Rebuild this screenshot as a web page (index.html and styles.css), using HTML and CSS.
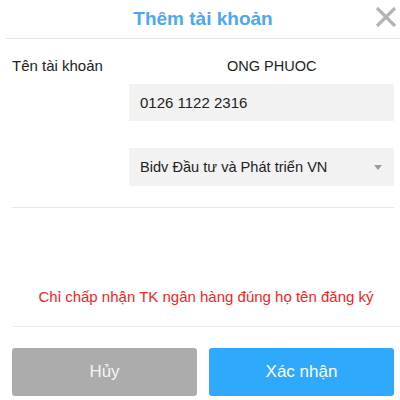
FILE: index.html
```html
<!DOCTYPE html>
<html>
<head>
	<meta charset="utf-8">
	<title>Thêm tài khoản</title>
	<link rel="stylesheet" href="styles.css">
</head>
<body>
	<div class="dialog">
		<!-- header with title and close button -->
		<div class="header">
			<span class="title">Thêm tài khoản</span>
			<svg class="close" width="22" height="20" viewBox="0 0 22 20">
				<line x1="2" y1="1" x2="20" y2="19" />
				<line x1="20" y1="1" x2="2" y2="19" />
			</svg>
		</div>
		<!-- account fields -->
		<div class="form">
			<div class="label">Tên tài khoản</div>
			<div class="value"><span class="name">ONG PHUOC</span></div>
			<div></div>
			<div class="field">0126 1122 2316</div>
			<div></div>
			<div class="field select">
				<span>Bidv Đầu tư và Phát triển VN</span>
				<span class="arrow"></span>
			</div>
		</div>
		<!-- warning -->
		<p class="notice">Chỉ chấp nhận TK ngân hàng đúng họ tên đăng ký</p>
		<!-- buttons -->
		<div class="actions">
			<div class="btn cancel">Hủy</div>
			<div class="btn confirm">Xác nhận</div>
		</div>
	</div>
</body>
</html>
```

FILE: styles.css
```css
body {
	margin: 0;
	background-color: white;
	font-family: "Liberation Sans", Arial, sans-serif;
	color: #222;
}
.dialog {
	width: 400px;
	height: 400px;
	overflow: hidden;
}
/* title bar */
.header {
	position: relative;
	margin-left: 6px;
	height: 38px;
	border-bottom: 1px solid #e2e2e2;
	display: flex;
	align-items: center;
	justify-content: center;
}
.title {
	font-size: 19px;
	font-weight: bold;
	color: #4ea7f1;
}
.close {
	position: absolute;
	right: 3px;
	top: 7px;
}
.close line {
	stroke: #b4b4b4;
	stroke-width: 3.2;
}
/* form rows */
.form {
	margin: 0 6px 0 12px;
	padding-top: 13px;
	padding-bottom: 21px;
	border-bottom: 1px solid #e8e8e8;
	display: grid;
	grid-template-columns: 117px 265px;
	font-size: 15px;
}
.label, .value {
	height: 28px;
	line-height: 28px;
}
.name {
	padding-left: 98px;
	font-size: 14.5px;
}
.field {
	height: 37px;
	margin-top: 4px;
	background-color: #f2f2f2;
	padding-left: 11px;
	display: flex;
	align-items: center;
}
.select {
	height: 38px;
	margin-top: 27px;
	justify-content: space-between;
	padding-right: 12px;
	font-size: 14.6px;
}
.arrow {
	width: 0;
	height: 0;
	border-left: 4px solid transparent;
	border-right: 4px solid transparent;
	border-top: 5px solid #9a9a9a;
}
/* warning text */
.notice {
	margin: 0 0 0 12px;
	padding: 79px 0 19px;
	line-height: 20px;
	font-size: 15px;
	color: #f32424;
	text-align: center;
	border-bottom: 1px solid #ececec;
}
/* bottom buttons */
.actions {
	display: flex;
	gap: 12px;
	padding: 21px 0 0 12px;
}
.btn {
	width: 185px;
	height: 48px;
	border-radius: 3px;
	display: flex;
	align-items: center;
	justify-content: center;
	font-size: 17px;
	color: white;
}
.cancel {
	background-color: #acacac;
	color: #f4f4f4;
}
.confirm {
	background-color: #2fa9fb;
}
```
